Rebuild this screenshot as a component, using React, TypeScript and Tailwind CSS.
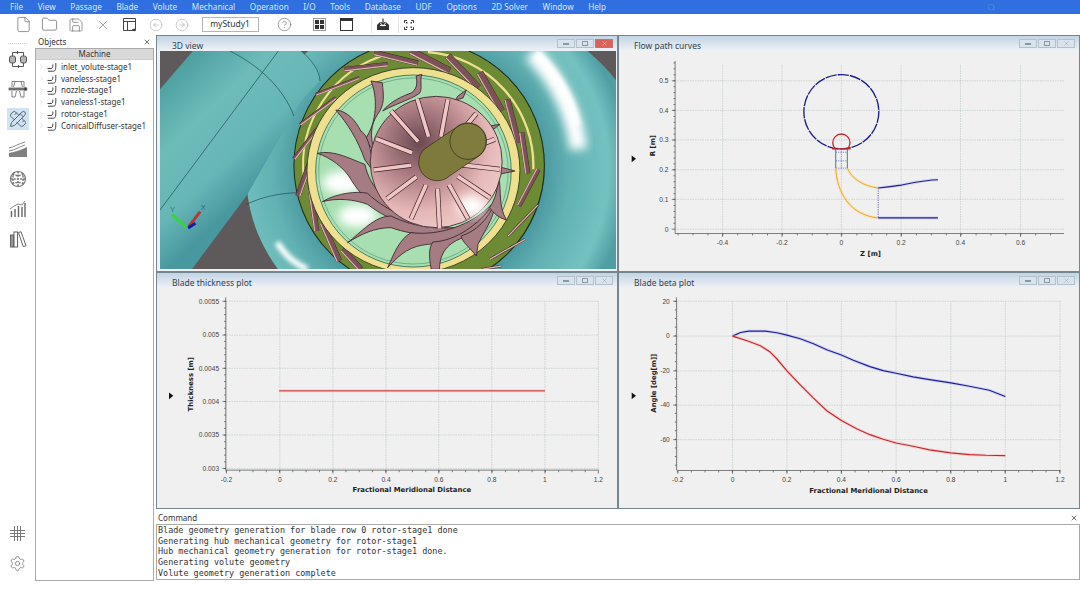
import React from "react";
import {
  ChevronRight,
  CircleArrowLeft,
  CircleArrowRight,
  CircleHelp,
  File,
  Folder,
  PencilRuler,
  Save,
  Search,
  Settings,
  X,
} from "lucide-react";

const menus = ["File", "View", "Passage", "Blade", "Volute", "Mechanical", "Operation", "I/O", "Tools", "Database", "UDF", "Options", "2D Solver", "Window", "Help"];
const tree = ["inlet_volute-stage1", "vaneless-stage1", "nozzle-stage1", "vaneless1-stage1", "rotor-stage1", "ConicalDiffuser-stage1"];
const logLines = [
  "Blade geometry generation for blade row 0 rotor-stage1 done",
  "Generating hub mechanical geometry for rotor-stage1",
  "Hub mechanical geometry generation for rotor-stage1 done.",
  "Generating volute geometry",
  "Volute geometry generation complete",
];

type Pt = [number, number];
const toPath = (pts: Pt[]) => pts.map((p, i) => (i ? "L" : "M") + p[0] + "," + p[1]).join(" ");

// stator vanes on the olive ring: [x1, y1, x2, y2, width]
const vanes: number[][] = [
  [640, 50, 770, 82, 15], [750, 45, 865, 105, 20], [860, 60, 950, 155, 20], [955, 110, 1020, 225, 20],
  [1037, 190, 1070, 320, 17], [1080, 290, 1098, 412, 14], [1130, 400, 1072, 510, 12], [400, 368, 480, 265, 9],
  [418, 265, 525, 185, 7], [465, 175, 595, 125, 7], [550, 100, 680, 85, 12], [412, 480, 455, 360, 14],
  [450, 460, 468, 585, 14], [485, 560, 535, 675, 16], [545, 640, 600, 700, 16],
];
const slimVanes: number[][] = [
  [1128, 508, 1040, 600], [1090, 610, 985, 670], [1020, 690, 960, 700],
];
const hubStrips: Pt[] = [
  [690, 225], [768, 188], [860, 190], [945, 232], [1000, 310], [1015, 400], [985, 485], [920, 548], [835, 578], [750, 548], [678, 488], [638, 402], [645, 308],
];
const impellerBlades = [
  "M630,135 L664,140 C668,180 672,205 650,235 C630,265 625,300 642,350 L612,310 C650,260 650,180 630,135Z",
  "M525,222 C560,225 585,255 600,285 C625,300 630,350 640,410 L612,372 C590,310 560,262 525,222Z",
  "M470,352 C520,340 570,370 612,385 C625,450 680,525 830,575 C720,572 620,515 570,430 C550,395 510,365 470,352Z",
  "M485,497 C530,470 590,465 620,472 C680,530 780,570 880,578 C790,590 690,560 620,505 C580,490 530,485 485,497Z",
  "M560,620 C600,590 640,540 690,540 C760,575 860,590 950,560 C860,610 760,600 690,575 C640,575 600,595 560,620Z",
  "M680,695 C700,650 715,610 750,590 C830,600 930,570 990,505 C950,585 860,620 800,625 C750,630 720,650 680,695Z",
  "M810,700 C805,670 800,640 815,618 C880,615 950,570 1000,500 C985,570 940,600 905,605 C850,625 835,660 835,700Z",
  "M945,660 C925,635 900,615 900,600 C945,585 980,550 1000,500 C1003,540 960,600 950,625Z",
  "M1035,552 C1010,545 995,530 985,515 C1000,490 1010,460 1012,420 C1020,470 1010,510 1035,552Z",
  "M1060,405 L1012,392 L1012,415Z",
  "M1015,265 L972,272 L990,285Z",
  "M915,162 L890,180 L882,192 L905,186Z",
  "M782,115 L765,120 C768,140 770,155 752,170 C725,180 690,195 665,225 C700,205 750,190 775,172 C785,160 775,135 782,115Z",
];

const Scene = () => (
  <svg viewBox="0 45 1362 654" preserveAspectRatio="none" className="block w-full h-full">
    <defs>
      <linearGradient id="pipe" gradientUnits="userSpaceOnUse" x1="40" y1="80" x2="340" y2="400">
        <stop offset="0" stopColor="#4a9c9e" />
        <stop offset="0.4" stopColor="#6dbcb9" />
        <stop offset="0.75" stopColor="#66b6b6" />
        <stop offset="1" stopColor="#48989f" />
      </linearGradient>
      <radialGradient id="torus" gradientUnits="userSpaceOnUse" cx="780" cy="400" r="620">
        <stop offset="0.58" stopColor="#4a989f" />
        <stop offset="0.72" stopColor="#62b2b3" />
        <stop offset="0.9" stopColor="#74c2c0" />
        <stop offset="1" stopColor="#4f9ea3" />
      </radialGradient>
      <radialGradient id="hub" gradientUnits="userSpaceOnUse" cx="775" cy="320" r="280">
        <stop offset="0" stopColor="#6a4a50" />
        <stop offset="0.35" stopColor="#a87a80" />
        <stop offset="0.75" stopColor="#e6b8b8" />
        <stop offset="1" stopColor="#f0cac8" />
      </radialGradient>
      <filter id="soft" x="-30%" y="-30%" width="160%" height="160%">
        <feGaussianBlur stdDeviation="14" />
      </filter>
      <filter id="softer" x="-30%" y="-30%" width="160%" height="160%">
        <feGaussianBlur stdDeviation="7" />
      </filter>
    </defs>
    <rect x="0" y="45" width="1362" height="654" fill="#5e595b" />
    <ellipse cx="860" cy="420" rx="602" ry="520" fill="url(#torus)" />
    <path d="M0,160 L100,43 H420 C455,75 478,100 478,135 C440,170 410,210 395,240 L258,480 L95,700 H0Z" fill="url(#pipe)" />
    <polygon points="1318,43 1365,43 1365,110" fill="#5e595b" />
    <path d="M1110,50 C1190,130 1240,240 1250,340" fill="none" stroke="#ffffff" strokeWidth="52" filter="url(#soft)" />
    <path d="M1125,50 C1195,125 1235,200 1245,270" fill="none" stroke="#ffffff" strokeWidth="22" filter="url(#softer)" />
    <path d="M350,620 C375,660 400,680 440,700" fill="none" stroke="#ffffff" strokeWidth="18" filter="url(#softer)" />
    <g fill="none" stroke="#1d4a50" strokeWidth="2">
      <path d="M205,43 C300,90 370,160 400,240" />
      <path d="M420,43 C455,75 475,100 478,135" />
      <path d="M355,43 L0,522" />
      <path d="M258,505 C300,485 350,472 410,470" />
    </g>
    <circle cx="784" cy="392" r="366" fill="#2a6570" />
    <circle cx="774" cy="388" r="374" fill="#6d8a35" stroke="#1d2b18" strokeWidth="3" />
    <path d="M800,48 A342,342 0 0 1 1115,400" fill="none" stroke="#eee08e" strokeWidth="7" />
    <path d="M430,430 A346,346 0 0 1 680,55" fill="none" stroke="#eee08e" strokeWidth="6" />
    {vanes.map((v, i) => {
      const dx = v[2] - v[0];
      const dy = v[3] - v[1];
      const len = Math.hypot(dx, dy);
      const ox = (-dy / len) * v[4] * 0.4;
      const oy = (dx / len) * v[4] * 0.4;
      return (
        <g key={i}>
          <line x1={v[0]} y1={v[1]} x2={v[2]} y2={v[3]} stroke="#2d1e20" strokeWidth={v[4] + 2} />
          <line x1={v[0]} y1={v[1]} x2={v[2]} y2={v[3]} stroke="#7c5158" strokeWidth={v[4]} />
          <line x1={v[0] + ox} y1={v[1] + oy} x2={v[2] + ox} y2={v[3] + oy} stroke="#e2b4b2" strokeWidth="3.5" />
        </g>
      );
    })}
    {slimVanes.map((v, i) => (
      <g key={i}>
        <line x1={v[0]} y1={v[1]} x2={v[2]} y2={v[3]} stroke="#2d1e20" strokeWidth="7" />
        <line x1={v[0]} y1={v[1]} x2={v[2]} y2={v[3]} stroke="#e2b4b2" strokeWidth="4" />
      </g>
    ))}
    <ellipse cx="757" cy="403" rx="318" ry="308" fill="#eee08e" stroke="#2b3320" strokeWidth="2.5" />
    <ellipse cx="757" cy="405" rx="292" ry="288" fill="#a7dfb0" stroke="#2e6a50" strokeWidth="2.5" />
    <ellipse cx="757" cy="405" rx="283" ry="279" fill="none" stroke="#3b7f62" strokeWidth="1.5" />
    <ellipse cx="545" cy="440" rx="60" ry="34" fill="#ffffff" filter="url(#soft)" />
    <ellipse cx="590" cy="540" rx="58" ry="34" fill="#ffffff" filter="url(#soft)" />
    {impellerBlades.map((d) => (
      <path key={d} d={d} fill="#a47c82" stroke="#35202a" strokeWidth="2.5" />
    ))}
    <circle cx="825" cy="378" r="197" fill="url(#hub)" stroke="#35202a" strokeWidth="2.5" />
    <ellipse cx="930" cy="510" rx="42" ry="30" fill="#ffffff" filter="url(#soft)" />
    {hubStrips.map((p, i) => {
      const sx = 825 + (p[0] - 825) * 0.4;
      const sy = 378 + (p[1] - 378) * 0.4;
      return (
        <g key={i}>
          <line x1={sx} y1={sy} x2={p[0]} y2={p[1]} stroke="#3a2429" strokeWidth="15" />
          <line x1={sx} y1={sy} x2={p[0]} y2={p[1]} stroke="#f0c5c4" strokeWidth="11" />
        </g>
      );
    })}
    <path
      d="M790,339 L882,276 A55,55 0 0 1 958,356 L866,419 A55,55 0 0 1 790,339Z"
      fill="#7e7a3b"
      stroke="#2d2c14"
      strokeWidth="2"
    />
    <circle cx="920" cy="316" r="54" fill="#7f7c3d" stroke="#2d2c14" strokeWidth="2" />
    <line x1="35" y1="535" x2="80" y2="575" stroke="#3bd33b" strokeWidth="9" />
    <line x1="86" y1="572" x2="120" y2="527" stroke="#b5383c" strokeWidth="9" />
    <line x1="84" y1="576" x2="106" y2="562" stroke="#1a1ca8" strokeWidth="9" />
    <text x="30" y="528" fontSize="22" fill="#2e7c7c" className="font-['Liberation_Sans',sans-serif]">Y</text>
    <text x="122" y="522" fontSize="22" fill="#2e6c7c" className="font-['Liberation_Sans',sans-serif]">X</text>
  </svg>
);

type PlotProps = {
  box: string;
  axisX: number;
  axisY: number;
  top: number;
  right: number;
  left: number;
  xTicks: [string, number][];
  yTicks: [string, number][];
  xMinor: number[];
  yMinor: number[];
  xLabel: string;
  xLabelAt: number;
  yLabel: string;
  yLabelAt: [number, number];
  marker: Pt;
  children: React.ReactNode;
};

const range = (from: number, to: number, step: number) => {
  const out: number[] = [];
  for (let v = from; v <= to + 0.01; v += step) out.push(v);
  return out;
};

const Plot = (p: PlotProps) => (
  <svg viewBox={p.box} className="block w-full h-full">
    <g stroke="#9fb2ad" strokeWidth="2" strokeDasharray="2 3">
      {p.xTicks.map(([t, x]) => (
        <line key={t} x1={x} y1={p.top} x2={x} y2={p.axisY} />
      ))}
      {p.yTicks.map(([t, y]) => (
        <line key={t} x1={p.axisX} y1={y} x2={p.right} y2={y} />
      ))}
    </g>
    <g stroke="#444444" strokeWidth="2">
      <line x1={p.axisX} y1={p.top - 12} x2={p.axisX} y2={p.axisY} />
      <line x1={p.left} y1={p.axisY} x2={p.right} y2={p.axisY} />
      {p.xMinor.map((x) => (
        <line key={x} x1={x} y1={p.axisY} x2={x} y2={p.axisY + 6} />
      ))}
      {p.xTicks.map(([t, x]) => (
        <line key={t} x1={x} y1={p.axisY} x2={x} y2={p.axisY + 10} />
      ))}
      {p.yMinor.map((y) => (
        <line key={y} x1={p.axisX - 5} y1={y} x2={p.axisX} y2={y} />
      ))}
      {p.yTicks.map(([t, y]) => (
        <line key={t} x1={p.axisX - 10} y1={y} x2={p.axisX} y2={y} />
      ))}
    </g>
    <g fontSize="20" fill="#444444" className="font-['Liberation_Sans',sans-serif]">
      {p.xTicks.map(([t, x]) => (
        <text key={t} x={x} y={p.axisY + 35} textAnchor="middle">{t}</text>
      ))}
      {p.yTicks.map(([t, y]) => (
        <text key={t} x={p.axisX - 20} y={y + 7} textAnchor="end">{t}</text>
      ))}
    </g>
    <g fontSize="20.800" fontWeight="700" fill="#222222" className="font-['DejaVu_Sans',sans-serif]">
      <text x={p.xLabelAt} y={p.axisY + 67} textAnchor="middle">{p.xLabel}</text>
      <text x={p.yLabelAt[0]} y={p.yLabelAt[1]} textAnchor="middle" transform={`rotate(-90 ${p.yLabelAt[0]} ${p.yLabelAt[1]})`}>
        {p.yLabel}
      </text>
    </g>
    <polygon
      points={`${p.marker[0] - 6},${p.marker[1] - 10} ${p.marker[0] + 7},${p.marker[1]} ${p.marker[0] - 6},${p.marker[1] + 10}`}
      fill="#111111"
    />
    {p.children}
  </svg>
);

const Halo = ({ d, color, halo, width = 3 }: { d: string; color: string; halo: string; width?: number }) => (
  <g fill="none">
    <path d={d} stroke={halo} strokeWidth={width + 6} opacity="0.45" />
    <path d={d} stroke={color} strokeWidth={width} />
  </g>
);

const FlowPlot = () => (
  <Plot
    box="0 45 1374 660"
    axisX={163}
    axisY={595}
    top={87}
    left={163}
    right={1335}
    xTicks={[["-0.4", 306], ["-0.2", 485], ["0", 664], ["0.2", 844], ["0.4", 1023], ["0.6", 1204]]}
    yTicks={[["0.5", 135], ["0.4", 224], ["0.3", 313], ["0.2", 403], ["0.1", 492], ["0", 582]]}
    xMinor={range(172, 1295, 44.9)}
    yMinor={range(81, 582, 17.9)}
    xLabel="Z [m]"
    xLabelAt={752}
    yLabel="R [m]"
    yLabelAt={[103, 330]}
    marker={[38, 370]}
  >
    <g fill="none">
      <ellipse cx="664" cy="228" rx="113" ry="112" stroke="#1c1c8c" strokeWidth="4" strokeDasharray="34 3" />
      <path d="M647,340 L647,398 M682,340 L682,398" stroke="#2f8f5a" strokeWidth="3" />
      <path d="M647,350 H682 M647,376 H682 M647,398 H682" stroke="#5a55c8" strokeWidth="2" strokeDasharray="4 3" />
      <path d="M664,340 V398" stroke="#5a55c8" strokeWidth="1.5" strokeDasharray="4 3" />
      <path d="M775,458 V548" stroke="#2a2a9c" strokeWidth="2" strokeDasharray="4 3" />
      <path d="M646,340 A26,26 0 1 1 682,340" stroke="#c8242c" strokeWidth="4" />
      <path d="M636,340 H692" stroke="#c8242c" strokeWidth="4" />
    </g>
    <Halo d="M647,398 C650,470 690,540 775,548" color="#eda92c" halo="#f6d48a" width={3} />
    <Halo d="M682,398 C695,430 730,452 775,458" color="#eda92c" halo="#f6d48a" width={3} />
    <Halo d="M775,458 C800,455 825,452 845,449 C880,442 920,433 955,433" color="#1c1c9c" halo="#b5b5ec" width={3.500} />
    <Halo d="M775,548 H955" color="#1c1c9c" halo="#b5b5ec" width={3.500} />
  </Plot>
);

const ThicknessPlot = () => (
  <Plot
    box="6 48 1374 660"
    axisX={207}
    axisY={597}
    top={88}
    left={207}
    right={1330}
    xTicks={[["-0.2", 209], ["0", 370], ["0.2", 530], ["0.4", 690], ["0.6", 849], ["0.8", 1009], ["1", 1169], ["1.2", 1330]]}
    yTicks={[["0.0055", 88], ["0.005", 190], ["0.0045", 290], ["0.004", 390], ["0.0035", 491], ["0.003", 592]]}
    xMinor={range(209, 1330, 40.05)}
    yMinor={range(88, 592, 20.16)}
    xLabel="Fractional Meridional Distance"
    xLabelAt={768}
    yLabel="Thickness [m]"
    yLabelAt={[108, 338]}
    marker={[42, 373]}
  >
    <Halo d="M368,358 H1169" color="#c8252c" halo="#f6b5ae" />
  </Plot>
);

const blueBeta: Pt[] = [[336, 193], [360, 182], [385, 178], [435, 178], [470, 183], [500, 190], [540, 201], [580, 216], [620, 234], [664, 250], [700, 266], [750, 285], [790, 297], [829, 305], [880, 316], [930, 324], [994, 334], [1050, 344], [1110, 356], [1158, 375]];
const redBeta: Pt[] = [[336, 193], [380, 207], [420, 222], [448, 240], [470, 262], [500, 298], [540, 340], [580, 380], [620, 418], [664, 447], [710, 472], [750, 490], [790, 504], [829, 515], [880, 525], [930, 536], [994, 545], [1050, 550], [1100, 552], [1158, 553]];

const BetaPlot = () => (
  <Plot
    box="0 48 1374 660"
    axisX={167}
    axisY={598}
    top={88}
    left={170}
    right={1325}
    xTicks={[["-0.2", 171], ["0", 336], ["0.2", 500], ["0.4", 664], ["0.6", 829], ["0.8", 994], ["1", 1158], ["1.2", 1323]]}
    yTicks={[["20", 88], ["0", 193], ["-20", 298], ["-40", 401], ["-60", 505]]}
    xMinor={range(171, 1323, 41.1)}
    yMinor={range(88, 592, 26)}
    xLabel="Fractional Meridional Distance"
    xLabelAt={746}
    yLabel="Angle [deg[m]]"
    yLabelAt={[104, 335]}
    marker={[38, 373]}
  >
    <Halo d={toPath(blueBeta)} color="#1c1c9c" halo="#b5b5ec" width={3.500} />
    <Halo d={toPath(redBeta)} color="#c8252c" halo="#f6b5ae" width={3.500} />
  </Plot>
);

const WindowButtons = ({ active }: { active?: boolean }) => (
  <div className="flex gap-px mr-[4px]">
    {["min", "max", "close"].map((b) => (
      <div
        key={b}
        className={
          "flex items-center justify-center w-[18px] h-[9px] border " +
          (active && b === "close" ? "bg-[#d9625a] border-[#c8726c]" : "bg-[#d9e3ec] border-[#b4c1cb]")
        }
      >
        {b === "min" && <div className="w-[6px] h-[2px] border-t border-b border-[#8a98a3]" />}
        {b === "max" && <div className="w-[6px] h-[5px] border border-[#8a98a3]" />}
        {b === "close" && <X size={7} strokeWidth={1.4} color={active ? "#ffffff" : "#8a98a3"} />}
      </div>
    ))}
  </div>
);

const Panel = ({ title, active, children }: { title: string; active?: boolean; children: React.ReactNode }) => (
  <div className="flex flex-col min-h-0 border border-[#74868f]">
    <div className="flex items-center justify-between h-[15px] pl-[15px] bg-gradient-to-b from-[#c3d4e4] to-[#eef2f6]">
      <span className="text-[8.5px] leading-none text-[#33414d] pt-[6px]">{title}</span>
      <WindowButtons active={active} />
    </div>
    <div className="flex-1 min-h-0 bg-[#f0f0f0] px-px pb-px">{children}</div>
  </div>
);

const ToolBtn = ({ children, w = "w-[26.5px]", ml = "" }: { children: React.ReactNode; w?: string; ml?: string }) => (
  <div className={"flex items-center justify-center h-full " + w + " " + ml}>{children}</div>
);

const Toolbar = () => (
  <div className="flex items-center h-[21px] pl-[10px] bg-white text-[#666666]">
    <ToolBtn><File size={17} strokeWidth={1} /></ToolBtn>
    <ToolBtn><Folder size={17} strokeWidth={1} /></ToolBtn>
    <ToolBtn><Save size={16} strokeWidth={1} /></ToolBtn>
    <ToolBtn><X size={14} strokeWidth={1} /></ToolBtn>
    <ToolBtn>
      <svg width="15" height="15" viewBox="0 0 15 15" fill="none" stroke="#444444">
        <path d="M1.500 1.500h12v12h-12zM1.500 4.500h12M5.500 4.500v9" />
        <path d="M10.500 12.500l2 1.500v-2z" fill="#333333" />
      </svg>
    </ToolBtn>
    <ToolBtn><CircleArrowLeft size={14} strokeWidth={1} color="#aaaaaa" /></ToolBtn>
    <ToolBtn><CircleArrowRight size={14} strokeWidth={1} color="#aaaaaa" /></ToolBtn>
    <div className="flex items-center justify-center ml-[6px] w-[57px] h-[15px] border border-[#b5b5b5] text-[8.5px] text-[#333333]">
      myStudy1
    </div>
    <ToolBtn w="w-[20px]" ml="ml-[16px]"><CircleHelp size={15} strokeWidth={1} /></ToolBtn>
    <ToolBtn w="w-[20px]" ml="ml-[15px]">
      <div className="grid grid-cols-2 gap-px w-[13px] h-[13px] p-px border border-[#999999]">
        <div className="bg-[#333333]" />
        <div className="bg-[#333333]" />
        <div className="bg-[#333333]" />
        <div className="bg-[#333333]" />
      </div>
    </ToolBtn>
    <ToolBtn w="w-[20px]" ml="ml-[7px]">
      <div className="w-[13px] h-[13px] border border-[#333333] border-t-[3px]" />
    </ToolBtn>
    <div className="ml-[14px] w-px h-[16px] bg-[#e2e2e2]" />
    <ToolBtn w="w-[20px]" ml="ml-px">
      <svg width="14" height="13" viewBox="0 0 14 13">
        <path d="M1 7l3-3h6l3 3v5H1z" fill="#333333" />
        <path d="M4 7.500h6" stroke="#ffffff" />
        <path d="M7 0.500v6M4.800 4.200L7 6.500l2.200-2.300" fill="none" stroke="#ffffff" strokeWidth="2.600" />
        <path d="M7 0.500v6M4.800 4.200L7 6.500l2.200-2.300" fill="none" stroke="#333333" strokeWidth="1.200" />
      </svg>
    </ToolBtn>
    <div className="ml-[5px] w-px h-[16px] bg-[#e2e2e2]" />
    <ToolBtn w="w-[20px]">
      <svg width="12" height="12" viewBox="0 0 12 12" fill="#444444">
        <path d="M1 1h3v1H2v2H1zM8 1h3v3h-1V2H8zM1 8h1v2h2v1H1zM8 10h2V8h1v3H8z" />
        <rect x="3" y="3" width="1.500" height="1.500" />
        <rect x="7.500" y="3" width="1.500" height="1.500" />
        <rect x="3" y="7.500" width="1.500" height="1.500" />
        <rect x="7.500" y="7.500" width="1.500" height="1.500" />
      </svg>
    </ToolBtn>
  </div>
);

const SideIcon = ({ children, on }: { children: React.ReactNode; on?: boolean }) => (
  <div className="flex items-center justify-center h-[30px]">
    <div className={"flex items-center justify-center w-[22px] h-[22px] " + (on ? "bg-[#cfe3f4]" : "")}>{children}</div>
  </div>
);

const Sidebar = () => (
  <div className="flex flex-col w-[35px] pt-[8px] text-[#666666]">
    <div className="mx-[8px] border-t border-dotted border-[#cccccc]" />
    <SideIcon>
      <svg width="20" height="20" viewBox="0 0 20 20" fill="none" stroke="#555555">
        <rect x="1.500" y="7" width="6" height="7" rx="2" fill="#b5b5b5" />
        <rect x="12.500" y="7" width="6" height="7" rx="2" fill="#b5b5b5" />
        <path d="M4.500 7V3.500h11V7M4.500 14v3.500h11V14M9 2l1.500 1.500L9 5M11 16l-1.500 1.500L11 19" />
      </svg>
    </SideIcon>
    <SideIcon>
      <svg width="20" height="18" viewBox="0 0 20 18" fill="none" stroke="#666666" strokeWidth="0.800">
        <path d="M4 7V1.500h12V7M7 1.500L5.500 7M13 1.500L14.500 7M4 11v6h3l1.500-6M16 11v6h-3l-1.500-6" />
        <rect x="1" y="8" width="17" height="2" fill="#777777" />
        <circle cx="17.500" cy="9" r="1.500" fill="#333333" />
      </svg>
    </SideIcon>
    <SideIcon on><PencilRuler size={18} strokeWidth={1.2} color="#555555" /></SideIcon>
    <SideIcon>
      <svg width="20" height="18" viewBox="0 0 20 18" fill="none" stroke="#888888">
        <path d="M1 8C6 7 10 4 17 2M1 11C7 10 11 7 17 5" />
        <path d="M1 13C7 12 13 10 19 7V17H1z" fill="#808080" stroke="none" />
      </svg>
    </SideIcon>
    <SideIcon>
      <svg width="18" height="18" viewBox="0 0 18 18" fill="none" stroke="#777777">
        <circle cx="9" cy="9" r="7.500" strokeWidth="1.200" />
        <path d="M1.500 9h15M3.500 4C6 6 12 6 14.500 4M3.500 14C6 12 12 12 14.500 14M5 2.500C3.500 6 3.500 12 5 15.500M13 2.500C14.500 6 14.500 12 13 15.500M9 1.500v15" strokeDasharray="2 1.200" strokeWidth="1.500" />
      </svg>
    </SideIcon>
    <SideIcon>
      <svg width="18" height="18" viewBox="0 0 18 18" fill="none" stroke="#666666">
        <path d="M2.500 17v-6M6 17V9M9.500 17V6M13 17V7M16 17V3" strokeWidth="1.400" />
        <path d="M1 9l4-3 4-2 4 1 3-4" strokeWidth="0.800" />
      </svg>
    </SideIcon>
    <SideIcon>
      <svg width="18" height="18" viewBox="0 0 18 18" fill="none" stroke="#666666">
        <rect x="1.500" y="5" width="3" height="12" fill="#999999" />
        <rect x="5" y="2" width="3.500" height="15" />
        <path d="M9.500 2.500l2.500-.8 5 14-2.800.9z" />
      </svg>
    </SideIcon>
    <div className="flex-1" />
    <SideIcon>
      <svg width="17" height="17" viewBox="0 0 17 17" stroke="#777777" fill="none">
        <path d="M5.500 1v15M8.500 1v15M11.500 1v15M1 5.500h15M1 8.500h15M1 11.500h15" />
      </svg>
    </SideIcon>
    <div className="mb-[3px]">
      <SideIcon><Settings size={17} strokeWidth={1} /></SideIcon>
    </div>
  </div>
);

const BladeRowIcon = () => (
  <svg width="10" height="10" viewBox="0 0 10 10" fill="none" stroke="#333333" strokeWidth="0.900">
    <path d="M1 9.200h5.500C8.500 9.200 9 7 8.800 1" />
    <path d="M0.500 6.500h3.500C5.500 6.500 6 5 5.800 2.500" />
  </svg>
);

const Objects = () => (
  <div className="flex flex-col w-[119px]">
    <div className="flex items-center justify-between h-[13px] pl-[3px] pr-[3px] pt-[1px]">
      <span className="text-[8px] leading-none text-[#333333]">Objects</span>
      <X size={8} strokeWidth={2} color="#222222" />
    </div>
    <div className="flex flex-col flex-1 border border-[#aaaaaa] bg-white">
      <div className="flex items-center justify-center h-[11px] bg-[#d9d9d9] border-b border-[#cccccc] text-[8px] leading-none text-[#333333]">
        Machine
      </div>
      <div className="flex flex-col pt-[1px] pl-[2px]">
        {tree.map((t) => (
          <div key={t} className="flex items-center h-[11.8px] gap-[2px]">
            <ChevronRight size={7} strokeWidth={1} color="#999999" />
            <BladeRowIcon />
            <span className="pl-[2px] text-[8px] leading-none text-[#333333] whitespace-nowrap">{t}</span>
          </div>
        ))}
      </div>
    </div>
  </div>
);

const CommandBox = () => (
  <div className="flex flex-col h-[71px]">
    <div className="flex items-end justify-between h-[15px] pb-[2px] pl-[2px] pr-[2px] bg-white">
      <span className="text-[8px] leading-none text-[#333333]">Command</span>
      <X size={8} strokeWidth={2} color="#222222" />
    </div>
    <div className="flex-1 border border-[#aaaaaa] bg-white pl-[1px] overflow-hidden font-['DejaVu_Sans_Mono',monospace] text-[8.45px] leading-[10.7px] text-[#333333]">
      {logLines.map((l) => (
        <div key={l} className="whitespace-pre">{l}</div>
      ))}
    </div>
  </div>
);

const App = () => {
  return (
    <div className="flex flex-col w-[1080px] h-[593px] overflow-hidden bg-white font-['Noto_Sans',sans-serif]">
      <div className="flex items-center h-[14px] pl-[10px] bg-[#2f6fdf] text-[8.2px] leading-none text-[#dbe7fb]">
        <div className="flex gap-[14.600px]">
          {menus.map((m) => (
            <span key={m}>{m}</span>
          ))}
        </div>
        <Search size={9} strokeWidth={1.5} color="#5d90ea" className="ml-auto mr-[84px]" />
      </div>
      <Toolbar />
      <div className="flex h-[546px]">
        <Sidebar />
        <Objects />
        <div className="flex flex-col flex-1 ml-[2px]">
          <div className="grid grid-cols-2 grid-rows-2 h-[474px]">
            <Panel title="3D view" active>
              <div className="h-full pl-[2px] pb-px">
                <Scene />
              </div>
            </Panel>
            <Panel title="Flow path curves">
              <FlowPlot />
            </Panel>
            <Panel title="Blade thickness plot">
              <ThicknessPlot />
            </Panel>
            <Panel title="Blade beta plot">
              <BetaPlot />
            </Panel>
          </div>
          <CommandBox />
        </div>
      </div>
    </div>
  );
};

export default App;
